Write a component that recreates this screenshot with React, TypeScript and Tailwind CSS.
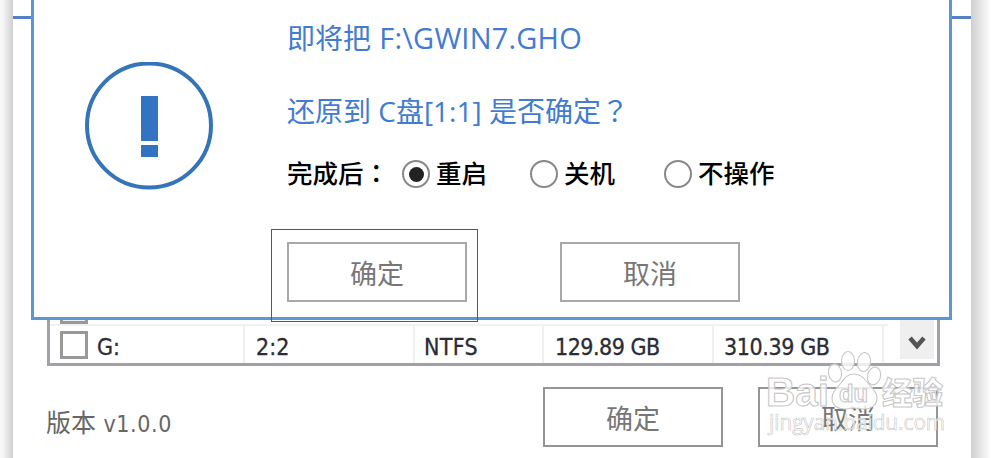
import React from "react";

const columns = [
  { text: "2:2", className: "w-[170px] pl-[11px]" },
  { text: "NTFS", className: "w-[129px] pl-[9px] tracking-[0.3px]" },
  { text: "129.89 GB", className: "w-[170px] pl-[11px] tracking-[-0.5px]" },
  { text: "310.39 GB", className: "w-[170px] pl-[10px] tracking-[-0.4px]" },
];

const options = [
  { label: "重启", checked: true, className: "w-[128px]" },
  { label: "关机", checked: false, className: "w-[134px]" },
  { label: "不操作", checked: false, className: "w-[120px]" },
];

const Button = ({ children, dark = false }: { children: React.ReactNode; dark?: boolean }) => (
  <button
    className={`flex h-[60px] w-[180px] shrink-0 items-center justify-center border-2 bg-white pt-[2px] text-[27px] leading-none text-[#777] ${
      dark ? "border-[#959595]" : "border-[#a8a8a8]"
    }`}
  >
    {children}
  </button>
);

const Radio = ({ checked }: { checked: boolean }) => (
  <span className="flex size-[28px] shrink-0 items-center justify-center rounded-full border-2 border-[#888] bg-white">
    {checked && <span className="size-[15px] rounded-full bg-[#222]" />}
  </span>
);

const Watermark = () => (
  <svg
    className="absolute left-[737px] top-[340px]"
    width="210"
    height="110"
    viewBox="750 340 210 110"
    fill="#fff"
    fillOpacity="0.8"
    stroke="#c8c8c8"
    strokeWidth="1.1"
  >
    <text x="766" y="406" fontSize="40" fontWeight="700" textLength="63" lengthAdjust="spacingAndGlyphs" fontFamily="Liberation Sans, sans-serif">
      Bai
    </text>
    <ellipse cx="835" cy="373" rx="6.5" ry="9" transform="rotate(-10 835 373)" />
    <ellipse cx="848" cy="361" rx="6.5" ry="9.5" />
    <ellipse cx="864" cy="362" rx="6.5" ry="9.5" transform="rotate(8 864 362)" />
    <ellipse cx="874" cy="376" rx="6.5" ry="9" transform="rotate(14 874 376)" />
    <path d="M854 374c-6 0-10 4-13 9-4 5-9 8-9 15 0 8 6 11 12 11 4 0 7-1 10-1s7 1 11 1c6 0 12-4 12-11s-6-11-10-16c-3-4-7-8-13-8Z" />
    <text x="839" y="402" fontSize="24" fontWeight="700" textLength="29" lengthAdjust="spacingAndGlyphs" fontFamily="Liberation Sans, sans-serif">
      du
    </text>
    <text x="882" y="404" fontSize="31" fontWeight="900" textLength="61" lengthAdjust="spacingAndGlyphs" fontFamily="Noto Sans CJK SC, sans-serif">
      经验
    </text>
    <text x="769" y="430" fontSize="21" textLength="176" lengthAdjust="spacingAndGlyphs" strokeWidth="0.6" fontFamily="Open Sans, sans-serif">
      jingyan.baidu.com
    </text>
  </svg>
);

const Dialog = () => (
  <div className="absolute -top-2 left-[18px] h-[328px] w-[921px] border-[3px] border-[#5b98d2] bg-white">
    <div className="flex pt-[67px]">
      <svg className="ml-[50px] shrink-0" width="130" height="130" viewBox="0 0 130 130">
        <circle cx="65" cy="63.5" r="62" fill="none" stroke="#3474b8" strokeWidth="4" />
        <path fill="#3273c2" d="M57 34h17v45H57zM57 83h17v12H57z" />
      </svg>
      <div className="-mt-[44px] ml-[73px] text-[28px] text-[#427bcf]">
        <p className="h-[72px] whitespace-pre leading-[40px]">
          即将把 <span className="ml-px text-[29px] tracking-[0.2px]">F:\GWIN7.GHO</span>
        </p>
        <p className="h-[66px] whitespace-pre leading-[40px]">
          还原到 C盘[1:1] 是否确定<span className="font-['Noto_Sans_CJK_TC',sans-serif]">？</span>
        </p>
        <div className="flex h-[36px] items-center text-[25.5px] font-medium leading-none text-black">
          <span className="w-[115px] whitespace-nowrap pb-[3px]">
            完成后<span className="font-['Noto_Sans_CJK_TC',sans-serif]">：</span>
          </span>
          {options.map((option) => (
            <label key={option.label} className={`flex shrink-0 items-center gap-[6px] whitespace-nowrap ${option.className}`}>
              <Radio checked={option.checked} />
              {option.label}
            </label>
          ))}
        </div>
        <div className="flex gap-[93px] pt-[50px]">
          <Button>确定</Button>
          <Button>取消</Button>
        </div>
      </div>
    </div>
    {/* highlight around the confirm button */}
    <div className="absolute left-[237px] top-[234px] h-[93px] w-[207px] border border-[#b03040]" />
  </div>
);

const DriveList = () => (
  <div className="ml-[34px] flex h-[74px] w-[893px] border-[3px] border-t-0 border-[#a0a0a6] bg-white">
    <div className="flex-1">
      <div className="mr-[12px] flex h-[34px] items-end border-b-2 border-[#f1f1f1] pl-[10px]">
        <span className="h-[28px] w-[28px] border-[3px] border-[#999] bg-[#eee]" />
      </div>
      <div className="flex h-[37px] items-center font-['DejaVu_Sans_Condensed','Noto_Sans',sans-serif] text-[23px] leading-none text-[#2c2c34] [-webkit-text-stroke:0.3px_#2c2c34]">
        <div className="flex h-full w-[195px] items-center border-r-2 border-[#f0f0f0] pl-[10px]">
          <span className="mr-[9px] size-[28px] border-[3px] border-[#999] bg-white" />
          <span className="pt-[5px]">G:</span>
        </div>
        {columns.map((column) => (
          <div key={column.text} className={`flex h-full items-center whitespace-nowrap border-r-2 border-[#f0f0f0] pt-[5px] ${column.className}`}>
            {column.text}
          </div>
        ))}
      </div>
    </div>
    <div className="mb-[4px] mr-[3px] flex w-[34px] items-end justify-center bg-[#efefef] pb-[7px]">
      <svg width="18" height="16" viewBox="0 0 18 16" fill="none" stroke="#555" strokeWidth="4.5">
        <path d="M2 2l7 8 7-8" />
      </svg>
    </div>
  </div>
);

const App = () => (
  <div className="flex h-[458px] w-[1000px] overflow-hidden bg-white font-['Open_Sans','Noto_Sans_CJK_SC',sans-serif]">
    <div className="w-[13px] shrink-0 bg-linear-to-r from-[#f7f7f7] from-20% to-[#cfcfcf]" />
    <main className="relative w-[958px] shrink-0 bg-white">
      <div className="h-[292px] pt-[16px]">
        <div className="h-[3px] bg-[#5580c8]" />
      </div>
      <DriveList />
      <div className="flex pl-[33px] pt-[21px]">
        <div className="w-[497px] whitespace-pre pt-[17px] text-[25px] leading-[36px] text-[#666]">
          版本 <span className="ml-px font-['DejaVu_Sans_Condensed','Noto_Sans',sans-serif] text-[23px] tracking-[0.6px]">v1.0.0</span>
        </div>
        <div className="flex gap-[35px]">
          <Button dark>确定</Button>
          <Button dark>取消</Button>
        </div>
      </div>
      <Dialog />
      <Watermark />
    </main>
    <div className="w-[20px] shrink-0 bg-linear-to-r from-[#cfcfcf] to-white" />
  </div>
);

export default App;
